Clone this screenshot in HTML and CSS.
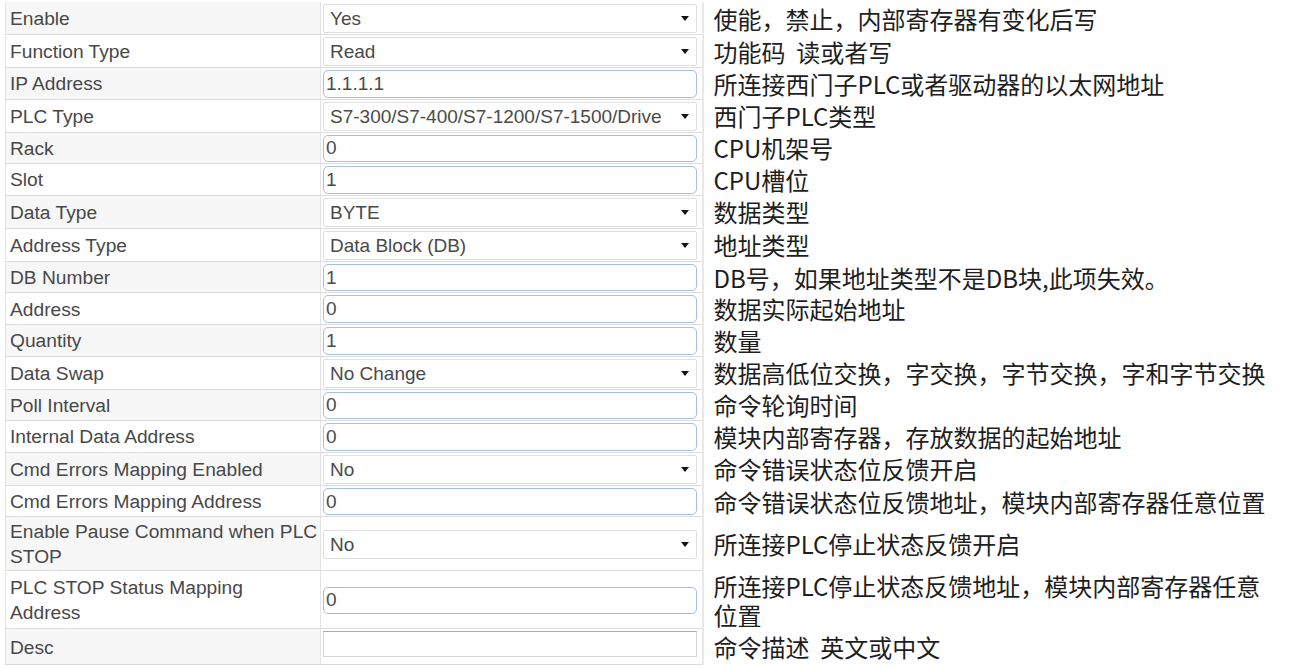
FILE: index.html
```html
<!DOCTYPE html>
<html lang="zh-CN">
<head>
  <meta charset="UTF-8">
  <title>S7 Command</title>
  <link rel="stylesheet" href="styles.css">
</head>
<body>

  <table class="cmd">
    <tr>
      <td class="name">Enable</td>
      <td class="val"><span class="drop"><select><option>Yes</option><option>No</option><option>Write on Change</option></select></span></td>
      <td class="note">使能，禁止，内部寄存器有变化后写</td>
    </tr>
    <tr>
      <td class="name">Function Type</td>
      <td class="val"><span class="drop"><select><option>Read</option><option>Write</option></select></span></td>
      <td class="note">功能码&nbsp; 读或者写</td>
    </tr>
    <tr>
      <td class="name">IP Address</td>
      <td class="val"><input type="text" value="1.1.1.1"></td>
      <td class="note">所连接西门子PLC或者驱动器的以太网地址</td>
    </tr>
    <tr>
      <td class="name">PLC Type</td>
      <td class="val"><span class="drop"><select><option>S7-300/S7-400/S7-1200/S7-1500/Drive</option><option>S7-200</option></select></span></td>
      <td class="note">西门子PLC类型</td>
    </tr>
    <tr>
      <td class="name">Rack</td>
      <td class="val"><input type="text" value="0"></td>
      <td class="note">CPU机架号</td>
    </tr>
    <tr>
      <td class="name">Slot</td>
      <td class="val"><input type="text" value="1"></td>
      <td class="note">CPU槽位</td>
    </tr>
    <tr>
      <td class="name">Data Type</td>
      <td class="val"><span class="drop"><select><option>BYTE</option><option>WORD</option><option>DWORD</option></select></span></td>
      <td class="note">数据类型</td>
    </tr>
    <tr>
      <td class="name">Address Type</td>
      <td class="val"><span class="drop"><select><option>Data Block (DB)</option><option>Input (I)</option><option>Output (Q)</option></select></span></td>
      <td class="note">地址类型</td>
    </tr>
    <tr>
      <td class="name">DB Number</td>
      <td class="val"><input type="text" value="1"></td>
      <td class="note">DB号，如果地址类型不是DB块,此项失效。</td>
    </tr>
    <tr>
      <td class="name">Address</td>
      <td class="val"><input type="text" value="0"></td>
      <td class="note">数据实际起始地址</td>
    </tr>
    <tr>
      <td class="name">Quantity</td>
      <td class="val"><input type="text" value="1"></td>
      <td class="note">数量</td>
    </tr>
    <tr>
      <td class="name">Data Swap</td>
      <td class="val"><span class="drop"><select><option>No Change</option><option>Word Swap</option></select></span></td>
      <td class="note">数据高低位交换，字交换，字节交换，字和字节交换</td>
    </tr>
    <tr>
      <td class="name">Poll Interval</td>
      <td class="val"><input type="text" value="0"></td>
      <td class="note">命令轮询时间</td>
    </tr>
    <tr>
      <td class="name">Internal Data Address</td>
      <td class="val"><input type="text" value="0"></td>
      <td class="note">模块内部寄存器，存放数据的起始地址</td>
    </tr>
    <tr>
      <td class="name">Cmd Errors Mapping Enabled</td>
      <td class="val"><span class="drop"><select><option>No</option><option>Yes</option></select></span></td>
      <td class="note">命令错误状态位反馈开启</td>
    </tr>
    <tr>
      <td class="name">Cmd Errors Mapping Address</td>
      <td class="val"><input type="text" value="0"></td>
      <td class="note">命令错误状态位反馈地址，模块内部寄存器任意位置</td>
    </tr>
    <tr class="tall">
      <td class="name">Enable Pause Command when PLC STOP</td>
      <td class="val"><span class="drop"><select><option>No</option><option>Yes</option></select></span></td>
      <td class="note">所连接PLC停止状态反馈开启</td>
    </tr>
    <tr class="tall">
      <td class="name">PLC STOP Status Mapping<br>Address</td>
      <td class="val"><input type="text" value="0"></td>
      <td class="note top">所连接PLC停止状态反馈地址，模块内部寄存器任意<br>位置</td>
    </tr>
    <tr>
      <td class="name">Desc</td>
      <td class="val"><input type="text" class="plain" value=""></td>
      <td class="note">命令描述&nbsp; 英文或中文</td>
    </tr>
  </table>

</body>
</html>
```

FILE: styles.css
```css
* {
  box-sizing: border-box;
}

body {
  margin: 0;
  background-color: #fff;
  font-family: "Liberation Sans", Arial, sans-serif;
  color: #484848;
}

.cmd {
  border-collapse: collapse;
  margin: 2px 0 0 5px;
}

.cmd td {
  padding: 2px 0 1px;
  vertical-align: middle;
}

.name,
.val {
  border-bottom: 1px solid #dcdcdc;
}

.name {
  width: 315px;
  padding-left: 4px !important;
  padding-right: 0 !important;
  border-left: 1px solid #e6e6e6;
  font-size: 19.2px;
  line-height: 25px;
}

.cmd tr:nth-child(odd) .name {
  background-color: #f7f7f7;
}

.val {
  width: 382px;
  padding-left: 2px !important;
  padding-right: 5px !important;
  border-left: 1px solid #e4e4e4;
}

.note {
  padding-left: 10px !important;
  border-left: 2px solid #e8e8e8;
  font-family: "Noto Sans CJK SC", sans-serif;
  font-size: 24px;
  line-height: 28px;
  color: #1e1e1e;
  width: 585px;
}

.note.top {
  vertical-align: top;
  padding-top: 0 !important;
  padding-bottom: 0 !important;
  line-height: 29px;
}

input,
select {
  display: block;
  width: 100%;
  margin: 0;
  font-family: "Liberation Sans", Arial, sans-serif;
  font-size: 19px;
  color: #4a4a4a;
  background-color: #fff;
}

input {
  height: 27.6px;
  padding: 0 2px;
  border: 1px solid #a8bedb;
  border-radius: 5px;
}

input.plain {
  height: 26px;
  margin-bottom: 6px;
  border: 1px solid #d4d4d4;
  border-top-color: #a9a9a9;
  border-radius: 0;
}

/* select with a small filled arrow instead of the native one */
.drop {
  position: relative;
  display: block;
}

.drop::after {
  content: "";
  position: absolute;
  right: 8px;
  top: 12px;
  border-left: 4.5px solid transparent;
  border-right: 4.5px solid transparent;
  border-top: 5px solid #111;
  pointer-events: none;
}

select {
  height: 29px;
  -webkit-appearance: none;
  appearance: none;
  padding: 0 20px 0 6px;
  border: 1px solid #dedede;
  border-radius: 2px;
}

.tall .name {
  padding-top: 2px !important;
  padding-bottom: 1px !important;
}
```
